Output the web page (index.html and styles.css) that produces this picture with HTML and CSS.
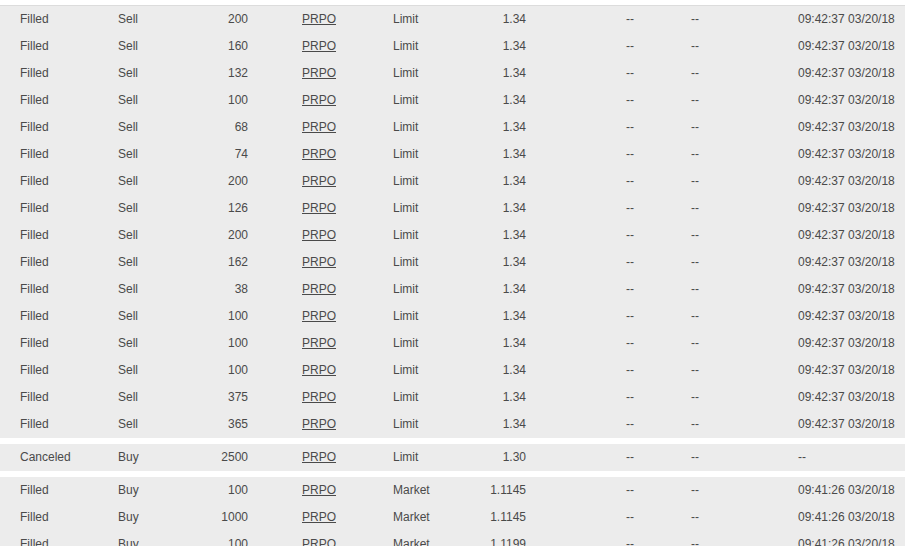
FILE: index.html
```html
<!DOCTYPE html>
<html>
<head>
<meta charset="utf-8">
<link rel="stylesheet" href="styles.css">
</head>
<body>
<div class="orders">
  <div class="group">
    <div class="row"><span>Filled</span><span>Sell</span><span class="num">200</span><span class="sym"><a>PRPO</a></span><span>Limit</span><span class="num">1.34</span><span class="d1">--</span><span>--</span><span>09:42:37 03/20/18</span></div>
    <div class="row"><span>Filled</span><span>Sell</span><span class="num">160</span><span class="sym"><a>PRPO</a></span><span>Limit</span><span class="num">1.34</span><span class="d1">--</span><span>--</span><span>09:42:37 03/20/18</span></div>
    <div class="row"><span>Filled</span><span>Sell</span><span class="num">132</span><span class="sym"><a>PRPO</a></span><span>Limit</span><span class="num">1.34</span><span class="d1">--</span><span>--</span><span>09:42:37 03/20/18</span></div>
    <div class="row"><span>Filled</span><span>Sell</span><span class="num">100</span><span class="sym"><a>PRPO</a></span><span>Limit</span><span class="num">1.34</span><span class="d1">--</span><span>--</span><span>09:42:37 03/20/18</span></div>
    <div class="row"><span>Filled</span><span>Sell</span><span class="num">68</span><span class="sym"><a>PRPO</a></span><span>Limit</span><span class="num">1.34</span><span class="d1">--</span><span>--</span><span>09:42:37 03/20/18</span></div>
    <div class="row"><span>Filled</span><span>Sell</span><span class="num">74</span><span class="sym"><a>PRPO</a></span><span>Limit</span><span class="num">1.34</span><span class="d1">--</span><span>--</span><span>09:42:37 03/20/18</span></div>
    <div class="row"><span>Filled</span><span>Sell</span><span class="num">200</span><span class="sym"><a>PRPO</a></span><span>Limit</span><span class="num">1.34</span><span class="d1">--</span><span>--</span><span>09:42:37 03/20/18</span></div>
    <div class="row"><span>Filled</span><span>Sell</span><span class="num">126</span><span class="sym"><a>PRPO</a></span><span>Limit</span><span class="num">1.34</span><span class="d1">--</span><span>--</span><span>09:42:37 03/20/18</span></div>
    <div class="row"><span>Filled</span><span>Sell</span><span class="num">200</span><span class="sym"><a>PRPO</a></span><span>Limit</span><span class="num">1.34</span><span class="d1">--</span><span>--</span><span>09:42:37 03/20/18</span></div>
    <div class="row"><span>Filled</span><span>Sell</span><span class="num">162</span><span class="sym"><a>PRPO</a></span><span>Limit</span><span class="num">1.34</span><span class="d1">--</span><span>--</span><span>09:42:37 03/20/18</span></div>
    <div class="row"><span>Filled</span><span>Sell</span><span class="num">38</span><span class="sym"><a>PRPO</a></span><span>Limit</span><span class="num">1.34</span><span class="d1">--</span><span>--</span><span>09:42:37 03/20/18</span></div>
    <div class="row"><span>Filled</span><span>Sell</span><span class="num">100</span><span class="sym"><a>PRPO</a></span><span>Limit</span><span class="num">1.34</span><span class="d1">--</span><span>--</span><span>09:42:37 03/20/18</span></div>
    <div class="row"><span>Filled</span><span>Sell</span><span class="num">100</span><span class="sym"><a>PRPO</a></span><span>Limit</span><span class="num">1.34</span><span class="d1">--</span><span>--</span><span>09:42:37 03/20/18</span></div>
    <div class="row"><span>Filled</span><span>Sell</span><span class="num">100</span><span class="sym"><a>PRPO</a></span><span>Limit</span><span class="num">1.34</span><span class="d1">--</span><span>--</span><span>09:42:37 03/20/18</span></div>
    <div class="row"><span>Filled</span><span>Sell</span><span class="num">375</span><span class="sym"><a>PRPO</a></span><span>Limit</span><span class="num">1.34</span><span class="d1">--</span><span>--</span><span>09:42:37 03/20/18</span></div>
    <div class="row"><span>Filled</span><span>Sell</span><span class="num">365</span><span class="sym"><a>PRPO</a></span><span>Limit</span><span class="num">1.34</span><span class="d1">--</span><span>--</span><span>09:42:37 03/20/18</span></div>
  </div>
  <div class="group">
    <div class="row"><span>Canceled</span><span>Buy</span><span class="num">2500</span><span class="sym"><a>PRPO</a></span><span>Limit</span><span class="num">1.30</span><span class="d1">--</span><span>--</span><span>--</span></div>
  </div>
  <div class="group">
    <div class="row"><span>Filled</span><span>Buy</span><span class="num">100</span><span class="sym"><a>PRPO</a></span><span>Market</span><span class="num">1.1145</span><span class="d1">--</span><span>--</span><span>09:41:26 03/20/18</span></div>
    <div class="row"><span>Filled</span><span>Buy</span><span class="num">1000</span><span class="sym"><a>PRPO</a></span><span>Market</span><span class="num">1.1145</span><span class="d1">--</span><span>--</span><span>09:41:26 03/20/18</span></div>
    <div class="row"><span>Filled</span><span>Buy</span><span class="num">100</span><span class="sym"><a>PRPO</a></span><span>Market</span><span class="num">1.1199</span><span class="d1">--</span><span>--</span><span>09:41:26 03/20/18</span></div>
  </div>
</div>
</body>
</html>
```
FILE: styles.css
```css
html, body {
  margin: 0;
  padding: 0;
  background: #ffffff;
}
body {
  font-family: "Liberation Sans", Arial, Helvetica, sans-serif;
  font-size: 12px;
  color: #4a4a4a;
  overflow: hidden;
}
.orders {
  width: 905px;
  padding-top: 5px;
  display: flex;
  flex-direction: column;
  gap: 6px;
}
.orders .group:first-child {
  border-top: 1px solid #dcdcdc;
}
.group {
  background: #ececec;
}
.row {
  display: grid;
  grid-template-columns: 98px 80px 50px 145px 83px 50px 165px 107px 1fr;
  padding-left: 20px;
  height: 27px;
  line-height: 26px;
  white-space: nowrap;
}
.num {
  text-align: right;
}
.sym {
  padding-left: 54px;
}
.sym a {
  color: #4a4a4a;
  text-decoration: underline;
}
.d1 {
  padding-left: 100px;
}
```
